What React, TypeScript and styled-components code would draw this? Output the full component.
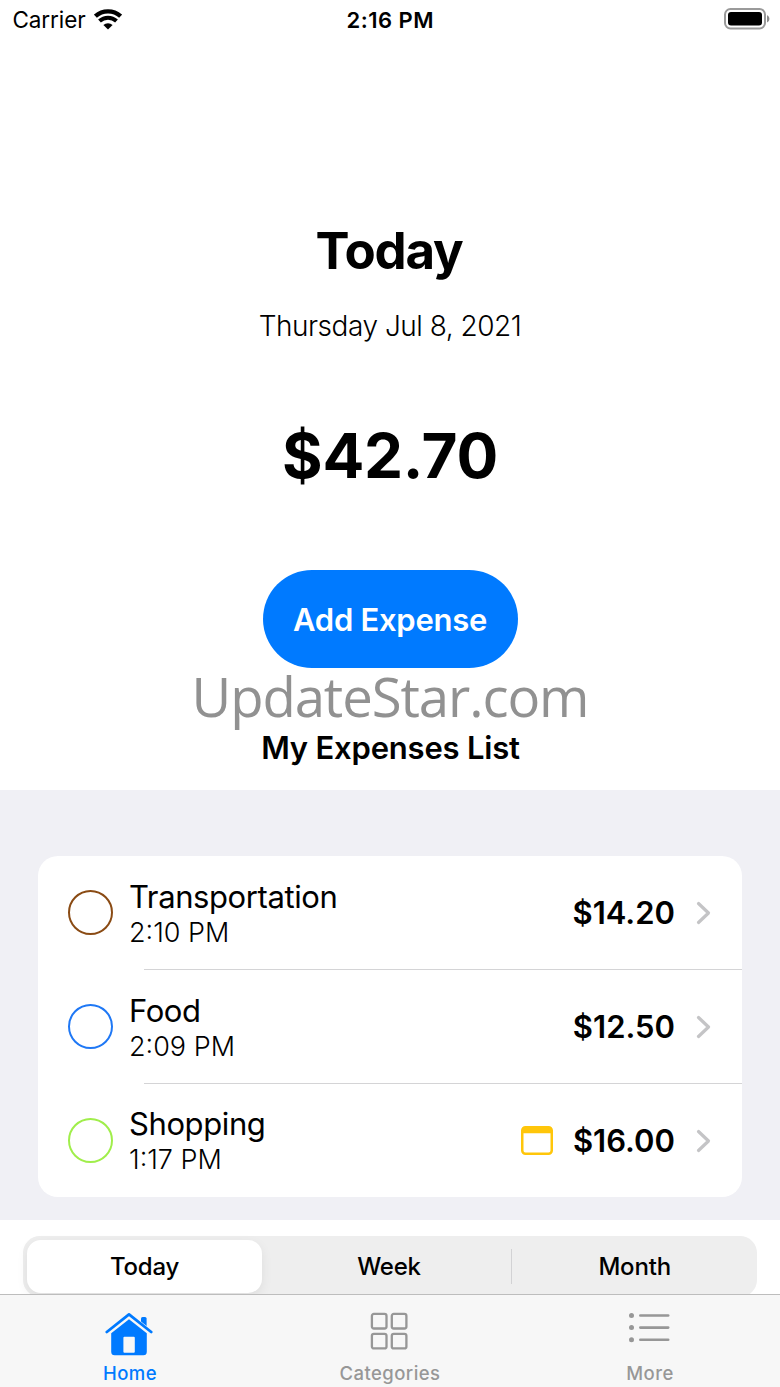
import React from "react";
import styled, { createGlobalStyle } from "styled-components";

const GlobalStyle = createGlobalStyle`
  * { box-sizing: border-box; }
  html, body { margin: 0; padding: 0; background: #fff; }
  body { font-family: Inter, "Liberation Sans", sans-serif; color: #000; -webkit-font-smoothing: antialiased; }
  button { font-family: inherit; border: 0; padding: 0; margin: 0; background: none; color: inherit; }
`;

const Screen = styled.div`
  width: 780px;
  height: 1387px;
  display: flex;
  flex-direction: column;
  background: #fff;
  overflow: hidden;
`;

const StatusBar = styled.header`
  height: 40px;
  flex: none;
  display: grid;
  grid-template-columns: 1fr auto 1fr;
  align-items: center;
  padding: 0 10px 0 12.5px;
  font-size: 22.5px;
  line-height: 40px;
`;

const Carrier = styled.div`
  display: flex;
  align-items: center;
  gap: 8.5px;
  letter-spacing: -0.1px;

  svg { margin-bottom: 2px; }
`;

const Clock = styled.div`
  font-weight: 600;
  font-size: 22px;
  letter-spacing: 0.5px;
  padding-right: 2px;
`;

const BatterySlot = styled.div`
  display: flex;
  justify-content: flex-end;
  padding-bottom: 2px;
`;

const Summary = styled.section`
  height: 750px;
  flex: none;
  display: flex;
  flex-direction: column;
  align-items: center;
  padding-top: 181px;
`;

const Heading = styled.h1`
  margin: 0;
  font-size: 51px;
  line-height: 60px;
  font-weight: 700;
  letter-spacing: -1.2px;
  padding-right: 2px;
`;

const DateLine = styled.p`
  margin: 25px 0 0;
  font-size: 28px;
  line-height: 40px;
  font-weight: 300;
  letter-spacing: -0.48px;
`;

const Total = styled.p`
  margin: 70px 0 0;
  font-size: 62px;
  line-height: 80px;
  font-weight: 700;
  letter-spacing: -0.3px;
`;

const AddButton = styled.button`
  margin-top: 74px;
  width: 255px;
  height: 98px;
  flex: none;
  border-radius: 49px;
  background: #007aff;
  color: #fff;
  font-size: 31px;
  font-weight: 600;
  letter-spacing: -0.28px;
`;

const Brand = styled.p`
  margin: 0;
  height: 60px;
  line-height: 56px;
  font-family: "Open Sans", sans-serif;
  font-size: 54.5px;
  font-weight: 400;
  letter-spacing: -1.1px;
  color: #919191;
`;

const ListTitle = styled.h2`
  margin: 0;
  font-size: 31px;
  line-height: 40px;
  font-weight: 600;
  letter-spacing: -0.2px;
  padding-left: 1px;
`;

const ListArea = styled.section`
  height: 430px;
  flex: none;
  padding: 66px 38px 0;
  background: #f0f0f5;
`;

const Card = styled.div`
  height: 341px;
  display: grid;
  grid-template-rows: 114px 114px 113px;
  border-radius: 20px;
  background: #fff;
  overflow: hidden;
`;

const Row = styled.div`
  display: flex;
  align-items: center;
  padding: 0 31px 0 30px;
  background: linear-gradient(#d4d4d6, #d4d4d6) 106px 100% / 100% 1px no-repeat;
  &:last-child { background: none; }
`;

const Ring = styled.span<{ $color: string }>`
  width: 45px;
  height: 45px;
  flex: none;
  margin-bottom: 1px;
  border-radius: 50%;
  border: 2px solid ${(p) => p.$color};
`;

const Labels = styled.div`
  flex: 1;
  margin-left: 16px;
  padding-top: 2px;
`;

const Name = styled.div`
  font-size: 31px;
  line-height: 36px;
  letter-spacing: -0.4px;
`;

const Time = styled.div`
  font-size: 27px;
  line-height: 35px;
  font-weight: 300;
`;

const Price = styled.div`
  margin: 0 21px 0 20px;
  font-size: 31px;
  line-height: 36px;
  font-weight: 600;
`;

const SegmentArea = styled.div`
  height: 74px;
  flex: none;
  padding: 16px 23px 0;
  overflow: hidden;
`;

const Segments = styled.div`
  height: 61px;
  display: grid;
  grid-template-columns: repeat(3, 1fr);
  border-radius: 17px;
  padding: 4px 0;
  background: #eeeeee;
`;

const Segment = styled.button<{ $active?: boolean; $divided?: boolean }>`
  height: 53px;
  font-size: 24px;
  font-weight: 500;
  letter-spacing: -0.2px;
  border-radius: ${(p) => (p.$divided ? 0 : "14px")};
  width: ${(p) => (p.$active ? "235px" : "auto")};
  margin-left: ${(p) => (p.$active ? "4px" : 0)};
  padding-right: ${(p) => (p.$divided ? "2px" : 0)};
  background: ${(p) =>
    p.$active
      ? "#fff"
      : p.$divided
        ? "linear-gradient(#d2d2d4, #d2d2d4) 100% 50% / 1.5px 35px no-repeat"
        : "none"};
  box-shadow: ${(p) => (p.$active ? "0 4px 12px rgba(0,0,0,.07)" : "none")};
`;

const TabBar = styled.nav`
  height: 93px;
  flex: none;
  display: grid;
  grid-template-columns: repeat(3, 1fr);
  border-top: 1px solid #bdbdbd;
  background: #f7f7f7;
`;

const Tab = styled.button<{ $active?: boolean }>`
  display: flex;
  flex-direction: column;
  align-items: center;
  padding: 17px 0 0;
  font-size: 18.5px;
  font-weight: 500;
  line-height: 24px;
  letter-spacing: 0.45px;
  color: ${(p) => (p.$active ? "#007aff" : "#979797")};
`;

const TabIcon = styled.span`
  height: 48.5px;
  display: block;
  padding-right: 2px;
`;

const WifiIcon = () => (
  <svg width="28" height="22" viewBox="0 0 28 22" fill="none">
    <path d="M1.4 8.2a18.9 18.9 0 0 1 25.200 0" stroke="#000" strokeWidth="4.400" />
    <path d="M5.500 13a12.700 12.700 0 0 1 17 0" stroke="#000" strokeWidth="4.100" />
    <path d="M9.400 17a6.700 6.700 0 0 1 9.200 0L14 21.500z" fill="#000" />
  </svg>
);

const BatteryIcon = () => (
  <svg width="46" height="22" viewBox="0 0 46 22" fill="none">
    <rect x="1" y="1" width="40" height="19.5" rx="5.5" stroke="#9a9a9a" strokeWidth="2" />
    <rect x="4" y="4" width="34" height="13.5" rx="3" fill="#000" />
    <path d="M43 7.2c3.2 1 3.2 6.2 0 7.2z" fill="#8c8c8c" />
  </svg>
);

const Chevron = () => (
  <svg width="15" height="24" viewBox="0 0 15 24" fill="none">
    <path d="M2.5 2.5 12.5 12 2.5 21.5" stroke="#c4c4c6" strokeWidth="3.2" strokeLinecap="round" strokeLinejoin="round" />
  </svg>
);

const CalendarIcon = () => (
  <svg width="32" height="29" viewBox="0 0 32 29" fill="none">
    <rect x="1.25" y="1.25" width="29.5" height="26.5" rx="3.2" stroke="#ffc60a" strokeWidth="2.5" />
    <path d="M1 7.3V4a3 3 0 0 1 3-3h24a3 3 0 0 1 3 3v3.3z" fill="#ffc60a" />
  </svg>
);

const HomeIcon = () => (
  <svg width="48" height="44" viewBox="0 0 48 44">
    <path d="M1.800 20 24 2.400 46.200 20" fill="none" stroke="#007aff" strokeWidth="2.800" strokeLinecap="round" strokeLinejoin="round" />
    <path d="M36 9.500V6.600q0-1.600 1.600-1.600h2.400q1.600 0 1.600 1.600v7.500z" fill="#007aff" />
    <path fillRule="evenodd" d="M24 7.200 41.800 21.300V39.800q0 3.500-3.500 3.500H9.700q-3.500 0-3.500-3.500V21.300zM19.400 24.800q-1 0-1 1v14q0 1 1 1h9.400q1 0 1-1v-14q0-1-1-1z" fill="#007aff" />
  </svg>
);

const GridIcon = () => (
  <svg width="38" height="38" viewBox="0 0 38 38" fill="none" stroke="#979797" strokeWidth="2.3">
    <rect x="1.900" y="1.900" width="14.600" height="14.600" rx="2" />
    <rect x="21.800" y="1.900" width="14.600" height="14.600" rx="2" />
    <rect x="1.900" y="21.800" width="14.600" height="14.600" rx="2" />
    <rect x="21.800" y="21.800" width="14.600" height="14.600" rx="2" />
  </svg>
);

const MoreIcon = () => (
  <svg width="42" height="38" viewBox="0 0 42 38" fill="#979797">
    {[3.5, 15.6, 27.7].map((y) => (
      <g key={y}>
        <circle cx="3.500" cy={y} r="2.500" />
        <rect x="11" y={y - 1.3} width="30.500" height="2.600" rx="1.300" />
      </g>
    ))}
  </svg>
);

const expenses = [
  { name: "Transportation", time: "2:10 PM", price: "$14.20", color: "#8a4b14" },
  { name: "Food", time: "2:09 PM", price: "$12.50", color: "#1f78f5" },
  { name: "Shopping", time: "1:17 PM", price: "$16.00", color: "#a0ee4b", scheduled: true },
];

export default function App() {
  return (
    <>
      <GlobalStyle />
      <Screen>
        <StatusBar>
          <Carrier><span>Carrier</span><WifiIcon /></Carrier>
          <Clock>2:16 PM</Clock>
          <BatterySlot><BatteryIcon /></BatterySlot>
        </StatusBar>
        <Summary>
          <Heading>Today</Heading>
          <DateLine>Thursday Jul 8, 2021</DateLine>
          <Total>$42.70</Total>
          <AddButton>Add Expense</AddButton>
          <Brand>UpdateStar.com</Brand>
          <ListTitle>My Expenses List</ListTitle>
        </Summary>
        <ListArea>
          <Card>
            {expenses.map((e) => (
              <Row key={e.name}>
                <Ring $color={e.color} />
                <Labels>
                  <Name>{e.name}</Name>
                  <Time>{e.time}</Time>
                </Labels>
                {e.scheduled && <CalendarIcon />}
                <Price>{e.price}</Price>
                <Chevron />
              </Row>
            ))}
          </Card>
        </ListArea>
        <SegmentArea>
          <Segments>
            <Segment $active>Today</Segment>
            <Segment $divided>Week</Segment>
            <Segment>Month</Segment>
          </Segments>
        </SegmentArea>
        <TabBar>
          <Tab $active><TabIcon><HomeIcon /></TabIcon>Home</Tab>
          <Tab><TabIcon><GridIcon /></TabIcon>Categories</Tab>
          <Tab><TabIcon><MoreIcon /></TabIcon>More</Tab>
        </TabBar>
      </Screen>
    </>
  );
}
